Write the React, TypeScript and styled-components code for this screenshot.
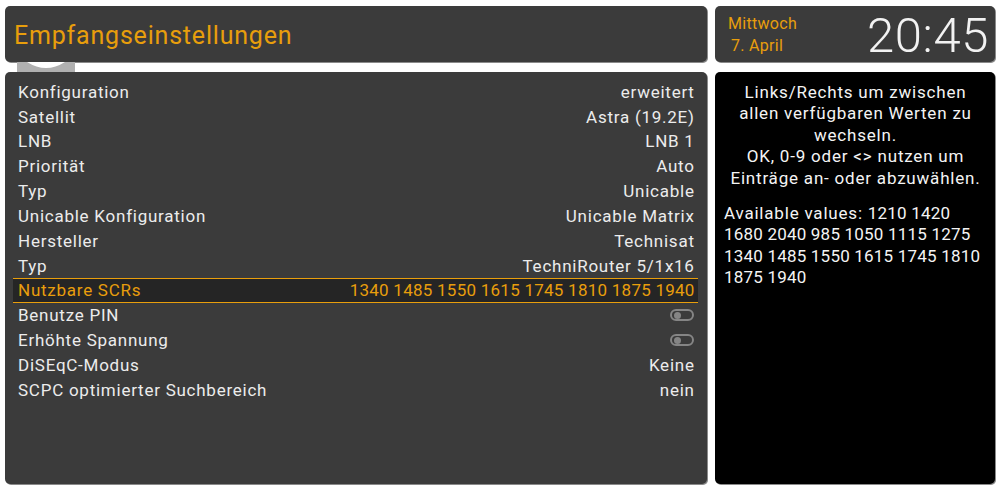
import React from "react";
import styled, { createGlobalStyle } from "styled-components";

const GlobalStyle = createGlobalStyle`
  html, body {
    margin: 0;
    padding: 0;
    background: #ffffff;
    font-family: Roboto, "Liberation Sans", sans-serif;
  }
`;

const Screen = styled.div`
  width: 1000px;
  height: 493px;
  box-sizing: border-box;
  padding: 6px 5px 9px 5px;
  display: grid;
  grid-template-columns: 702px 280px;
  column-gap: 8px;
`;

const Column = styled.div`
  display: flex;
  flex-direction: column;
  min-height: 0;
`;

const Panel = styled.div<{ $dark?: boolean }>`
  background: ${(p) => (p.$dark ? "#000000" : "#3b3b3b")};
  border-radius: 5px;
  box-shadow: 1px 1px 0 #8a8a8a;
  box-sizing: border-box;
`;

const HeaderPanel = styled(Panel)`
  height: 56px;
  display: flex;
  align-items: center;
  padding: 2px 9px 0 9px;
`;

const Title = styled.h1`
  margin: 0;
  font-size: 25px;
  font-weight: 400;
  letter-spacing: 0.8px;
  color: #e89e0c;
`;

const Connector = styled.svg`
  display: block;
  width: 58px;
  height: 10px;
  margin-left: 12px;
`;

const ListPanel = styled(Panel)`
  flex: 1;
  padding: 7.36px 9px 0 8px;
`;

const Row = styled.div<{ $active?: boolean }>`
  height: 24.83px;
  box-sizing: border-box;
  display: flex;
  align-items: center;
  justify-content: space-between;
  padding: 0 4px 0 5px;
  font-size: 17px;
  letter-spacing: 0.75px;
  color: ${(p) => (p.$active ? "#e89e0c" : "#ececec")};
  background: ${(p) => (p.$active ? "#252525" : "transparent")};
  border-top: 1px solid ${(p) => (p.$active ? "#e89e0c" : "transparent")};
  border-bottom: 1px solid ${(p) => (p.$active ? "#e89e0c" : "transparent")};
`;

const Value = styled.span<{ $numeric?: boolean }>`
  letter-spacing: ${(p) => (p.$numeric ? "0.25px" : "0.75px")};
  margin-right: -0.7px;
`;

const Toggle = styled.span`
  width: 24px;
  height: 12px;
  box-sizing: border-box;
  border: 2px solid #858585;
  border-radius: 7px;
  display: flex;
  align-items: center;
  padding: 0 2px;
  &::before {
    content: "";
    width: 7px;
    height: 7px;
    border-radius: 50%;
    background: #858585;
  }
`;

const ClockPanel = styled(Panel)`
  height: 56px;
  display: flex;
  align-items: center;
  justify-content: space-between;
  padding: 0 6px 0 13px;
`;

const DateBlock = styled.div`
  display: flex;
  flex-direction: column;
  gap: 3px;
  font-size: 16px;
  letter-spacing: 0.3px;
  color: #e89e0c;
  line-height: 19px;
`;

const DateLine = styled.span<{ $indent?: boolean }>`
  padding-left: ${(p) => (p.$indent ? "3px" : "0")};
`;

const Time = styled.div`
  font-size: 49px;
  font-weight: 300;
  color: #f2f2f2;
  letter-spacing: 0.6px;
  padding-top: 2px;
`;

const Gap = styled.div`
  height: 10px;
`;

const HelpPanel = styled(Panel)`
  flex: 1;
  padding: 10px 8px 0 9px;
  color: #f4f4f4;
  font-size: 17px;
  line-height: 21.4px;
  white-space: nowrap;
`;

const HelpCentered = styled.p`
  margin: 0;
  text-align: center;
  letter-spacing: 0.8px;
`;

const HelpValues = styled.p`
  margin: 14px 0 0 0;
  letter-spacing: 0.2px;
`;

const HelpLabel = styled.span`
  letter-spacing: 0.8px;
`;

type Item = { label: string; value?: string; toggle?: boolean; active?: boolean };

const items: Item[] = [
  { label: "Konfiguration", value: "erweitert" },
  { label: "Satellit", value: "Astra (19.2E)" },
  { label: "LNB", value: "LNB 1" },
  { label: "Priorität", value: "Auto" },
  { label: "Typ", value: "Unicable" },
  { label: "Unicable Konfiguration", value: "Unicable Matrix" },
  { label: "Hersteller", value: "Technisat" },
  { label: "Typ", value: "TechniRouter 5/1x16" },
  { label: "Nutzbare SCRs", value: "1340 1485 1550 1615 1745 1810 1875 1940", active: true },
  { label: "Benutze PIN", toggle: true },
  { label: "Erhöhte Spannung", toggle: true },
  { label: "DiSEqC-Modus", value: "Keine" },
  { label: "SCPC optimierter Suchbereich", value: "nein" },
];

const helpLines = [
  "Links/Rechts um zwischen",
  "allen verfügbaren Werten zu",
  "wechseln.",
  "OK, 0-9 oder <> nutzen um",
  "Einträge an- oder abzuwählen.",
];

const valueLines = [
  "1210 1420",
  "1680 2040 985 1050 1115 1275",
  "1340 1485 1550 1615 1745 1810",
  "1875 1940",
];

const App = () => {
  return (
    <>
      <GlobalStyle />
      <Screen>
        <Column>
          <HeaderPanel>
            <Title>Empfangseinstellungen</Title>
          </HeaderPanel>
          <Connector viewBox="0 0 58 10">
            <rect x="0" y="0" width="58" height="10" fill="#b0b0b0" />
            <path d="M10 0 Q29 12 48 0 Z" fill="#ffffff" />
          </Connector>
          <ListPanel>
            {items.map((item, i) => (
              <Row key={i} $active={item.active}>
                <span>{item.label}</span>
                {item.toggle ? (
                  <Toggle />
                ) : (
                  <Value $numeric={/^[\d ]+$/.test(item.value || "")}>{item.value}</Value>
                )}
              </Row>
            ))}
          </ListPanel>
        </Column>
        <Column>
          <ClockPanel>
            <DateBlock>
              <DateLine>Mittwoch</DateLine>
              <DateLine $indent>7. April</DateLine>
            </DateBlock>
            <Time>20:45</Time>
          </ClockPanel>
          <Gap />
          <HelpPanel $dark>
            <HelpCentered>
              {helpLines.map((line, i) => (
                <React.Fragment key={i}>
                  {line}
                  <br />
                </React.Fragment>
              ))}
            </HelpCentered>
            <HelpValues>
              <HelpLabel>Available values: </HelpLabel>
              {valueLines.map((line, i) => (
                <React.Fragment key={i}>
                  {line}
                  <br />
                </React.Fragment>
              ))}
            </HelpValues>
          </HelpPanel>
        </Column>
      </Screen>
    </>
  );
};

export default App;
